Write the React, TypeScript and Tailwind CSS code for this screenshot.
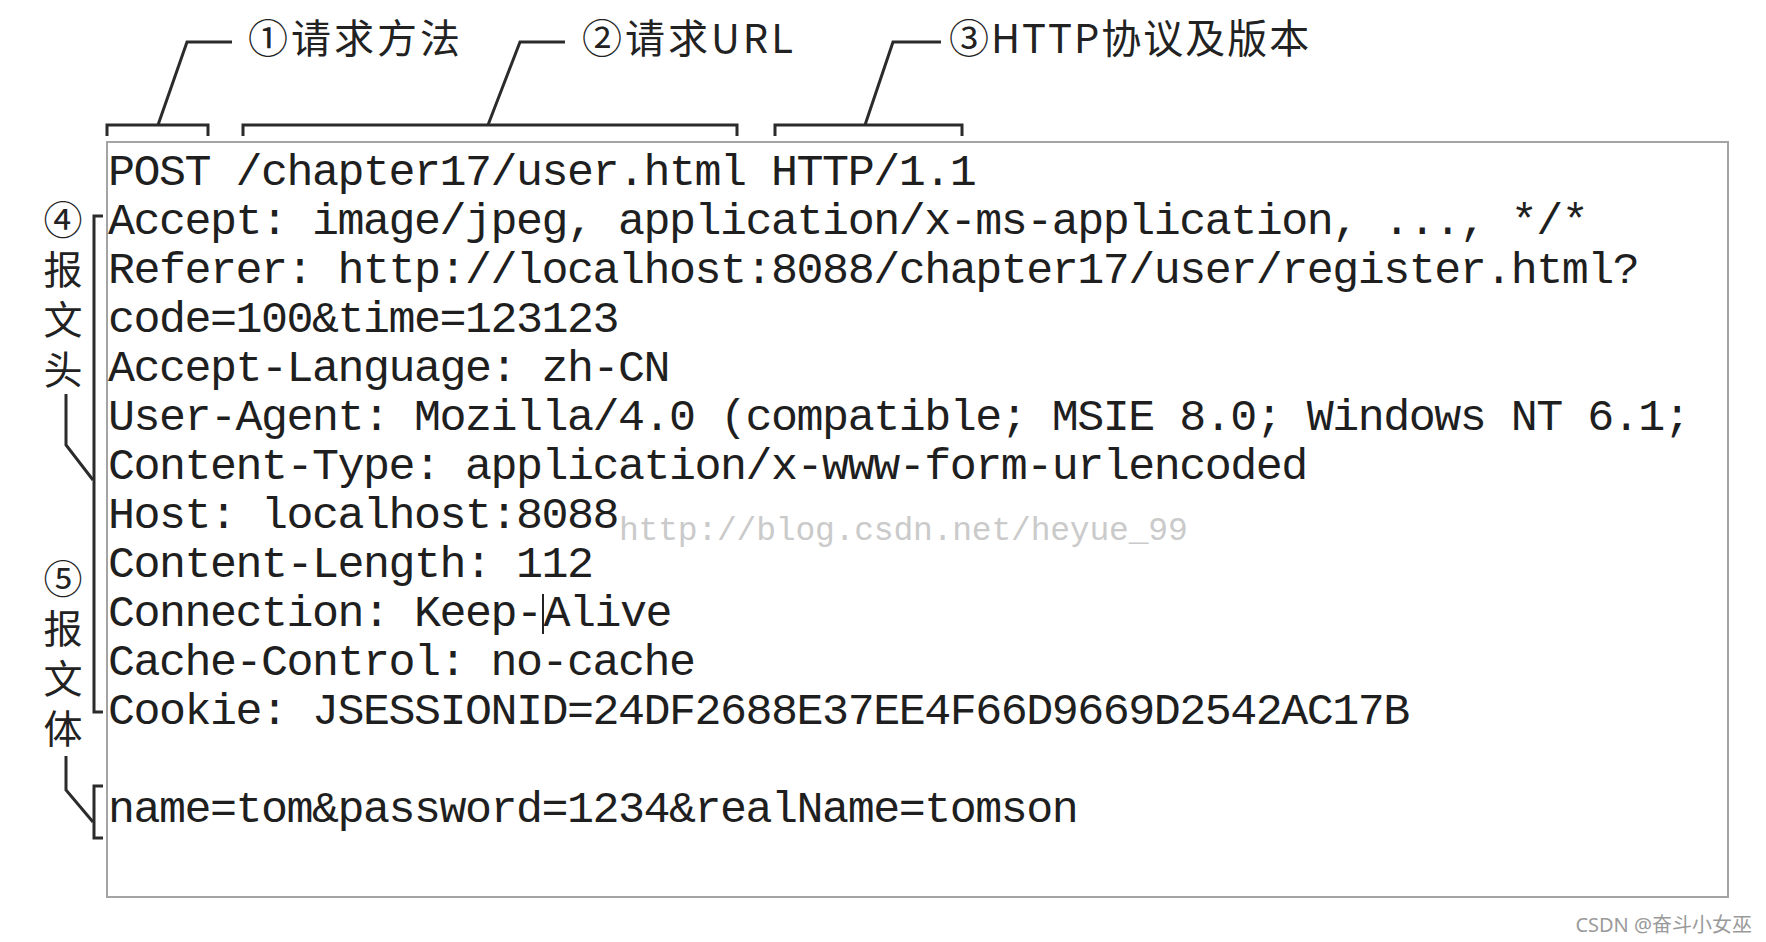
const headerLines = [
  "POST /chapter17/user.html HTTP/1.1",
  "Accept: image/jpeg, application/x-ms-application, ..., */*",
  "Referer: http://localhost:8088/chapter17/user/register.html?",
  "code=100&time=123123",
  "Accept-Language: zh-CN",
  "User-Agent: Mozilla/4.0 (compatible; MSIE 8.0; Windows NT 6.1;",
  "Content-Type: application/x-www-form-urlencoded",
  "Host: localhost:8088",
  "Content-Length: 112",
];

const tailLines = ["Cache-Control: no-cache", "Cookie: JSESSIONID=24DF2688E37EE4F66D9669D2542AC17B"];

const cjk = "font-['Noto_Sans_CJK_SC',sans-serif]";
const mono = "font-['Liberation_Mono','DejaVu_Sans_Mono',monospace]";

// vertical label, one char per 50px row
function SideLabel({ text }: { text: string }) {
  return (
    <div className="h-[200px] text-[39px] leading-[50px] text-center text-[#222] whitespace-pre-line">
      {text.split("").join("\n")}
    </div>
  );
}

export default function App() {
  return (
    <div className={`relative w-[1766px] h-[942px] bg-white overflow-hidden ${cjk}`}>
      {/* Top labels */}
      <div className="flex items-center h-[141px] pb-[69px] text-[40px] leading-none text-[#222] tracking-[2px]">
        <span className="ml-[248px] w-[334px] tracking-[3px]">①请求方法</span>
        <span className="w-[367px] tracking-[3px]">②请求URL</span>
        <span>③HTTP协议及版本</span>
      </div>

      <div className="flex">
        {/* Left labels */}
        <div className="w-[106px] flex flex-col pl-[42px] pr-[22px] pt-[51px] gap-[159px]">
          <SideLabel text="④报文头" />
          <SideLabel text="⑤报文体" />
        </div>

        {/* Message box */}
        <div
          className={`relative w-[1623px] h-[757px] border-2 border-[#a4a4a4] pt-[6px] text-[45px] leading-[49px] tracking-[-1.5px] text-[#1f1f1f] whitespace-pre ${mono}`}
        >
          {headerLines.map((l, i) => (
            <div key={i}>{l}</div>
          ))}
          <div>
            Connection: Keep-
            <span className="inline-block w-0 h-[40px] border-l-2 border-[#222] align-[-8px]" />
            Alive
          </div>
          {tailLines.map((l, i) => (
            <div key={i}>{l}</div>
          ))}
          <div className="h-[49px]" />
          <div>name=tom&amp;password=1234&amp;realName=tomson</div>

          {/* watermark */}
          <div className={`absolute left-[511px] top-[370px] text-[33px] leading-[37px] tracking-[-0.2px] text-[#cacaca] ${mono}`}>
            http://blog.csdn.net/heyue_99
          </div>
        </div>
      </div>

      <div className="flex justify-end pr-[14px] pt-[15px] text-[20px] leading-[24px] text-[#9a9a9a] font-['Noto_Sans','Noto_Sans_CJK_SC',sans-serif]">
        CSDN @奋斗小女巫
      </div>

      {/* brackets and leader lines */}
      <svg className="absolute inset-0 pointer-events-none" width="1766" height="942" viewBox="0 0 1766 942" fill="none" stroke="#2b2b2b" strokeWidth="3">
        <path d="M107 136 V125 H208 V136" />
        <path d="M158 125 L187 42 H232" />
        <path d="M243 136 V125 H737 V136" />
        <path d="M488 125 L520 42 H565" />
        <path d="M775 136 V125 H962 V136" />
        <path d="M865 125 L893 42 H941" />
        <path d="M103 216 H94 V712 H103" />
        <path d="M66 394 V445 L93 480" />
        <path d="M103 786 H94 V838 H103" />
        <path d="M66 756 V790 L93 822" />
      </svg>
    </div>
  );
}
